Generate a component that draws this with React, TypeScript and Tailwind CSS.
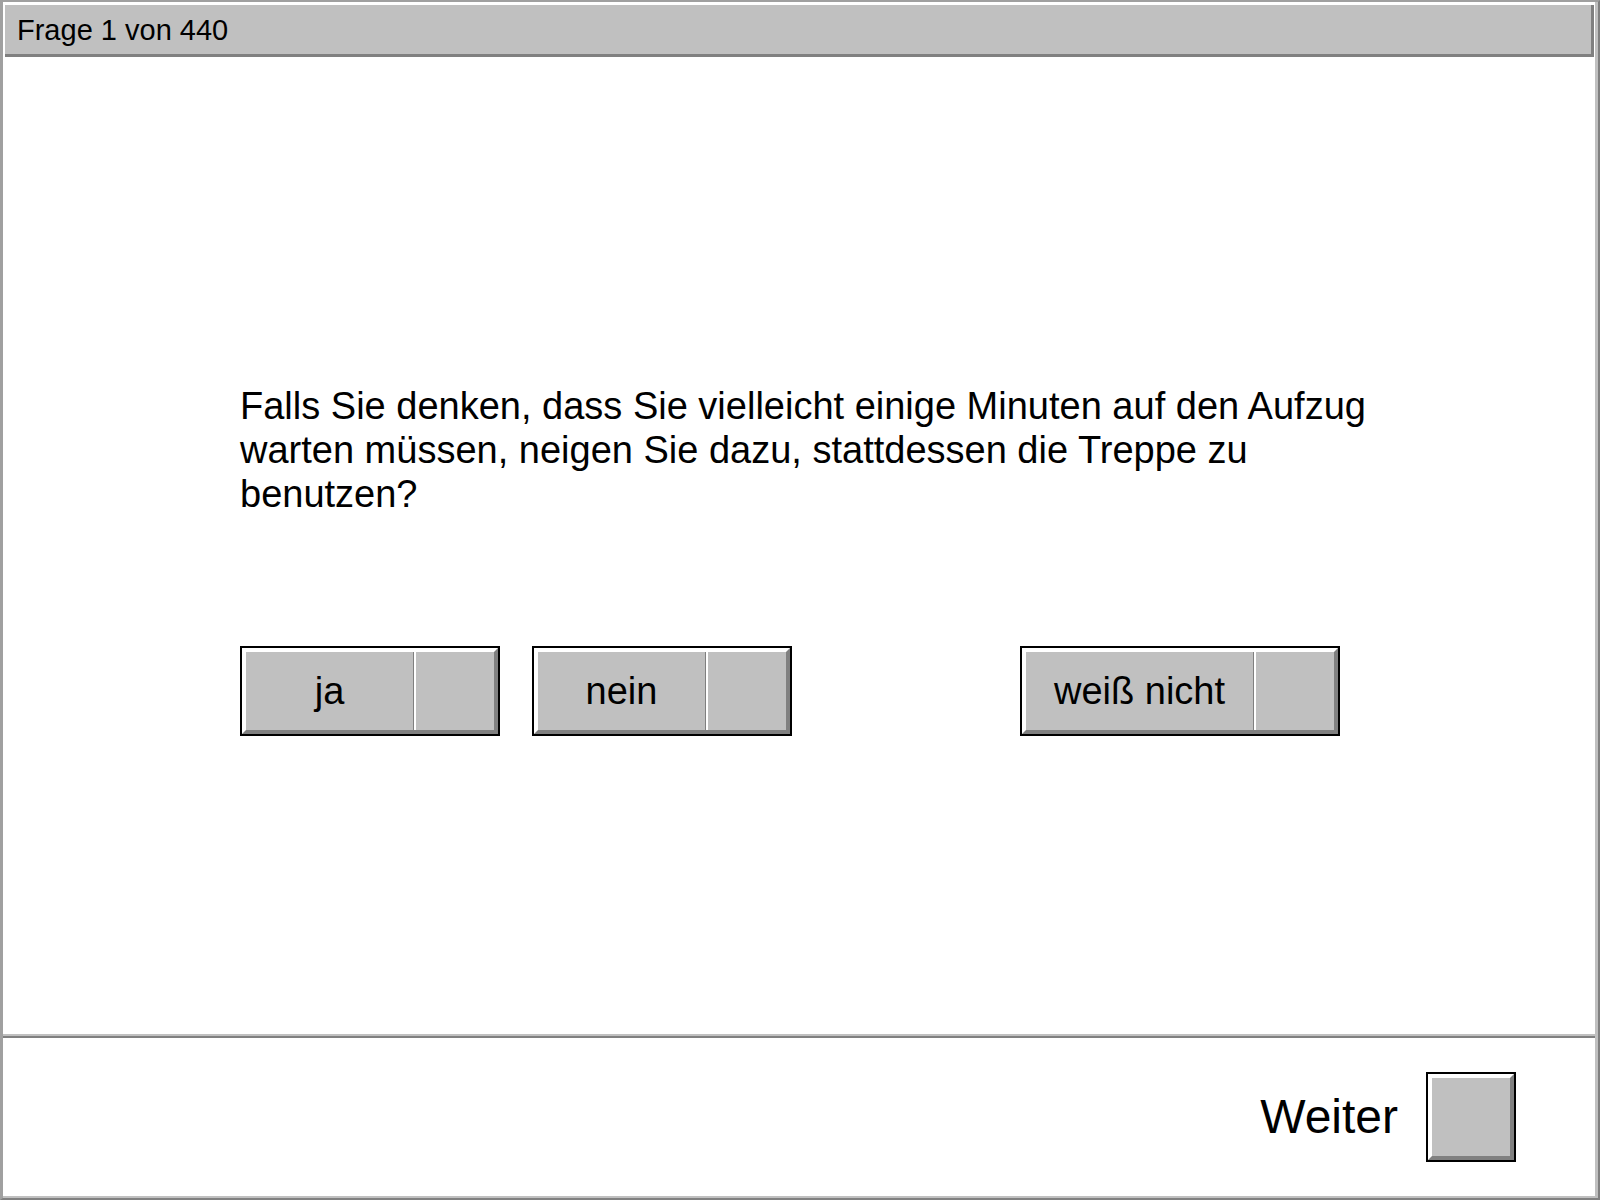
import React from 'react';

type AnswerProps = {
  label: string;
  width: string;
};

// 3D-Knopf: schwarzer Rahmen, heller Rand oben/links, dunkler unten/rechts
const AnswerButton: React.FC<AnswerProps> = ({ label, width }) => (
  <div className={`${width} h-[90px] border-2 border-black`}>
    <div className="flex h-full border-4 border-t-white border-l-white border-b-[#808080] border-r-[#808080] bg-[#c0c0c0]">
      <div className="flex flex-1 items-center justify-center border-r border-[#808080] text-[38px] leading-none">
        {label}
      </div>
      <div className="w-[80px] border-l-2 border-white" />
    </div>
  </div>
);

const App: React.FC = () => {
  return (
    <div
      className="w-[1600px] h-[1200px] bg-white text-black"
      style={{ fontFamily: '"Liberation Sans", Arial, sans-serif' }}
    >
      <div className="flex h-full flex-col border-t-2 border-l-[3px] border-r-[2px] border-b-[2px] border-t-[#a0a0a0] border-l-[#a0a0a0] border-r-[#808080] border-b-[#808080]">
        <div className="flex flex-1 flex-col border-r-[3px] border-b-2 border-r-[#c0c0c0] border-b-[#c0c0c0]">
          {/* kopfzeile */}
          <div className="mt-[3px] ml-[2px] mr-[1px] flex h-[52px] items-center border-b-[3px] border-r-[3px] border-[#808080] bg-[#c0c0c0] pl-[12px] pt-[3px] text-[29px]">
            Frage 1 von 440
          </div>

          {/* frage + antworten */}
          <div className="h-[977px] pl-[237px] pt-[327px]">
            <p className="w-[1140px] text-[38px] leading-[44px]">
              Falls Sie denken, dass Sie vielleicht einige Minuten auf den Aufzug warten müssen, neigen Sie dazu, stattdessen die Treppe zu benutzen?
            </p>
            <div className="mt-[130px] flex">
              <AnswerButton label="ja" width="w-[260px]" />
              <div className="ml-[32px]">
                <AnswerButton label="nein" width="w-[260px]" />
              </div>
              <div className="ml-[228px]">
                <AnswerButton label="weiß nicht" width="w-[320px]" />
              </div>
            </div>
          </div>

          {/* trennlinie */}
          <div className="h-[4px] border-t-2 border-b-2 border-t-[#c0c0c0] border-b-[#808080]" />

          {/* fußzeile */}
          <div className="flex flex-1 items-center justify-end pr-[79px]">
            <span className="mr-[28px] text-[48px] leading-none">Weiter</span>
            <div className="h-[90px] w-[90px] border-2 border-black">
              <div className="h-full border-4 border-t-white border-l-white border-b-[#808080] border-r-[#808080] bg-[#c0c0c0]" />
            </div>
          </div>
        </div>
      </div>
    </div>
  );
};

export default App;
